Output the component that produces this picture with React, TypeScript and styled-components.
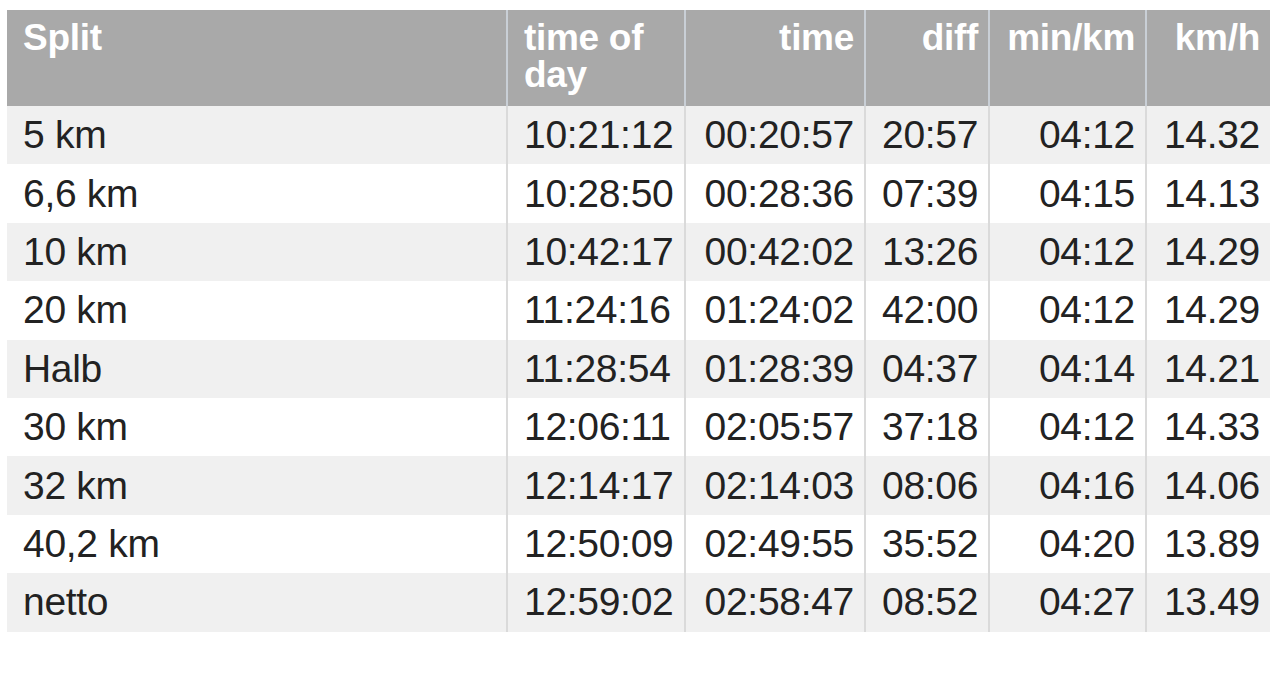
import React from "react";
import styled, { createGlobalStyle } from "styled-components";

const GlobalStyle = createGlobalStyle`
  html, body {
    margin: 0;
    padding: 0;
    background: #ffffff;
  }
  body {
    font-family: "Liberation Sans", Arial, Helvetica, sans-serif;
  }
`;

const Page = styled.div`
  padding: 10px 10px 0 7px;
`;

const Table = styled.table`
  width: 1263px;
  table-layout: fixed;
  border-collapse: collapse;
  border-spacing: 0;
  font-family: "Liberation Sans", Arial, Helvetica, sans-serif;
`;

type Align = "left" | "right";

const HeadCell = styled.th<{ $align: Align; $first?: boolean }>`
  background: #a9a9a9;
  color: #ffffff;
  font-weight: bold;
  font-size: 37px;
  line-height: 37px;
  letter-spacing: -0.3px;
  text-align: ${(p) => p.$align};
  vertical-align: top;
  padding: 9px 10px 0 16px;
  height: 96px;
  box-sizing: border-box;
  border-left: ${(p) => (p.$first ? "none" : "2px solid #c9cfd6")};
`;

const Row = styled.tr<{ $striped: boolean }>`
  background: ${(p) => (p.$striped ? "#f0f0f0" : "#ffffff")};
  height: 58.4px;
`;

const Cell = styled.td<{ $align: Align; $first?: boolean }>`
  color: #222222;
  font-size: 39px;
  line-height: 44px;
  letter-spacing: -0.3px;
  text-align: ${(p) => p.$align};
  vertical-align: middle;
  padding: 0 10px 0 16px;
  white-space: nowrap;
  border-left: ${(p) => (p.$first ? "none" : "2px solid #dadada")};
`;

const columns: { label: string; width: number; align: Align }[] = [
  { label: "Split", width: 500, align: "left" },
  { label: "time of day", width: 178, align: "left" },
  { label: "time", width: 180, align: "right" },
  { label: "diff", width: 124, align: "right" },
  { label: "min/km", width: 157, align: "right" },
  { label: "km/h", width: 124, align: "right" },
];

const rows: string[][] = [
  ["5 km", "10:21:12", "00:20:57", "20:57", "04:12", "14.32"],
  ["6,6 km", "10:28:50", "00:28:36", "07:39", "04:15", "14.13"],
  ["10 km", "10:42:17", "00:42:02", "13:26", "04:12", "14.29"],
  ["20 km", "11:24:16", "01:24:02", "42:00", "04:12", "14.29"],
  ["Halb", "11:28:54", "01:28:39", "04:37", "04:14", "14.21"],
  ["30 km", "12:06:11", "02:05:57", "37:18", "04:12", "14.33"],
  ["32 km", "12:14:17", "02:14:03", "08:06", "04:16", "14.06"],
  ["40,2 km", "12:50:09", "02:49:55", "35:52", "04:20", "13.89"],
  ["netto", "12:59:02", "02:58:47", "08:52", "04:27", "13.49"],
];

export default function App() {
  return (
    <>
      <GlobalStyle />
      <Page>
        <Table>
          <colgroup>
            {columns.map((c) => (
              <col key={c.label} style={{ width: c.width }} />
            ))}
          </colgroup>
          <thead>
            <tr>
              {columns.map((c, i) => (
                <HeadCell key={c.label} $align={c.align} $first={i === 0}>
                  {c.label}
                </HeadCell>
              ))}
            </tr>
          </thead>
          <tbody>
            {rows.map((r, ri) => (
              <Row key={r[0]} $striped={ri % 2 === 0}>
                {r.map((v, ci) => (
                  <Cell key={ci} $align={columns[ci].align} $first={ci === 0}>
                    {v}
                  </Cell>
                ))}
              </Row>
            ))}
          </tbody>
        </Table>
      </Page>
    </>
  );
}
